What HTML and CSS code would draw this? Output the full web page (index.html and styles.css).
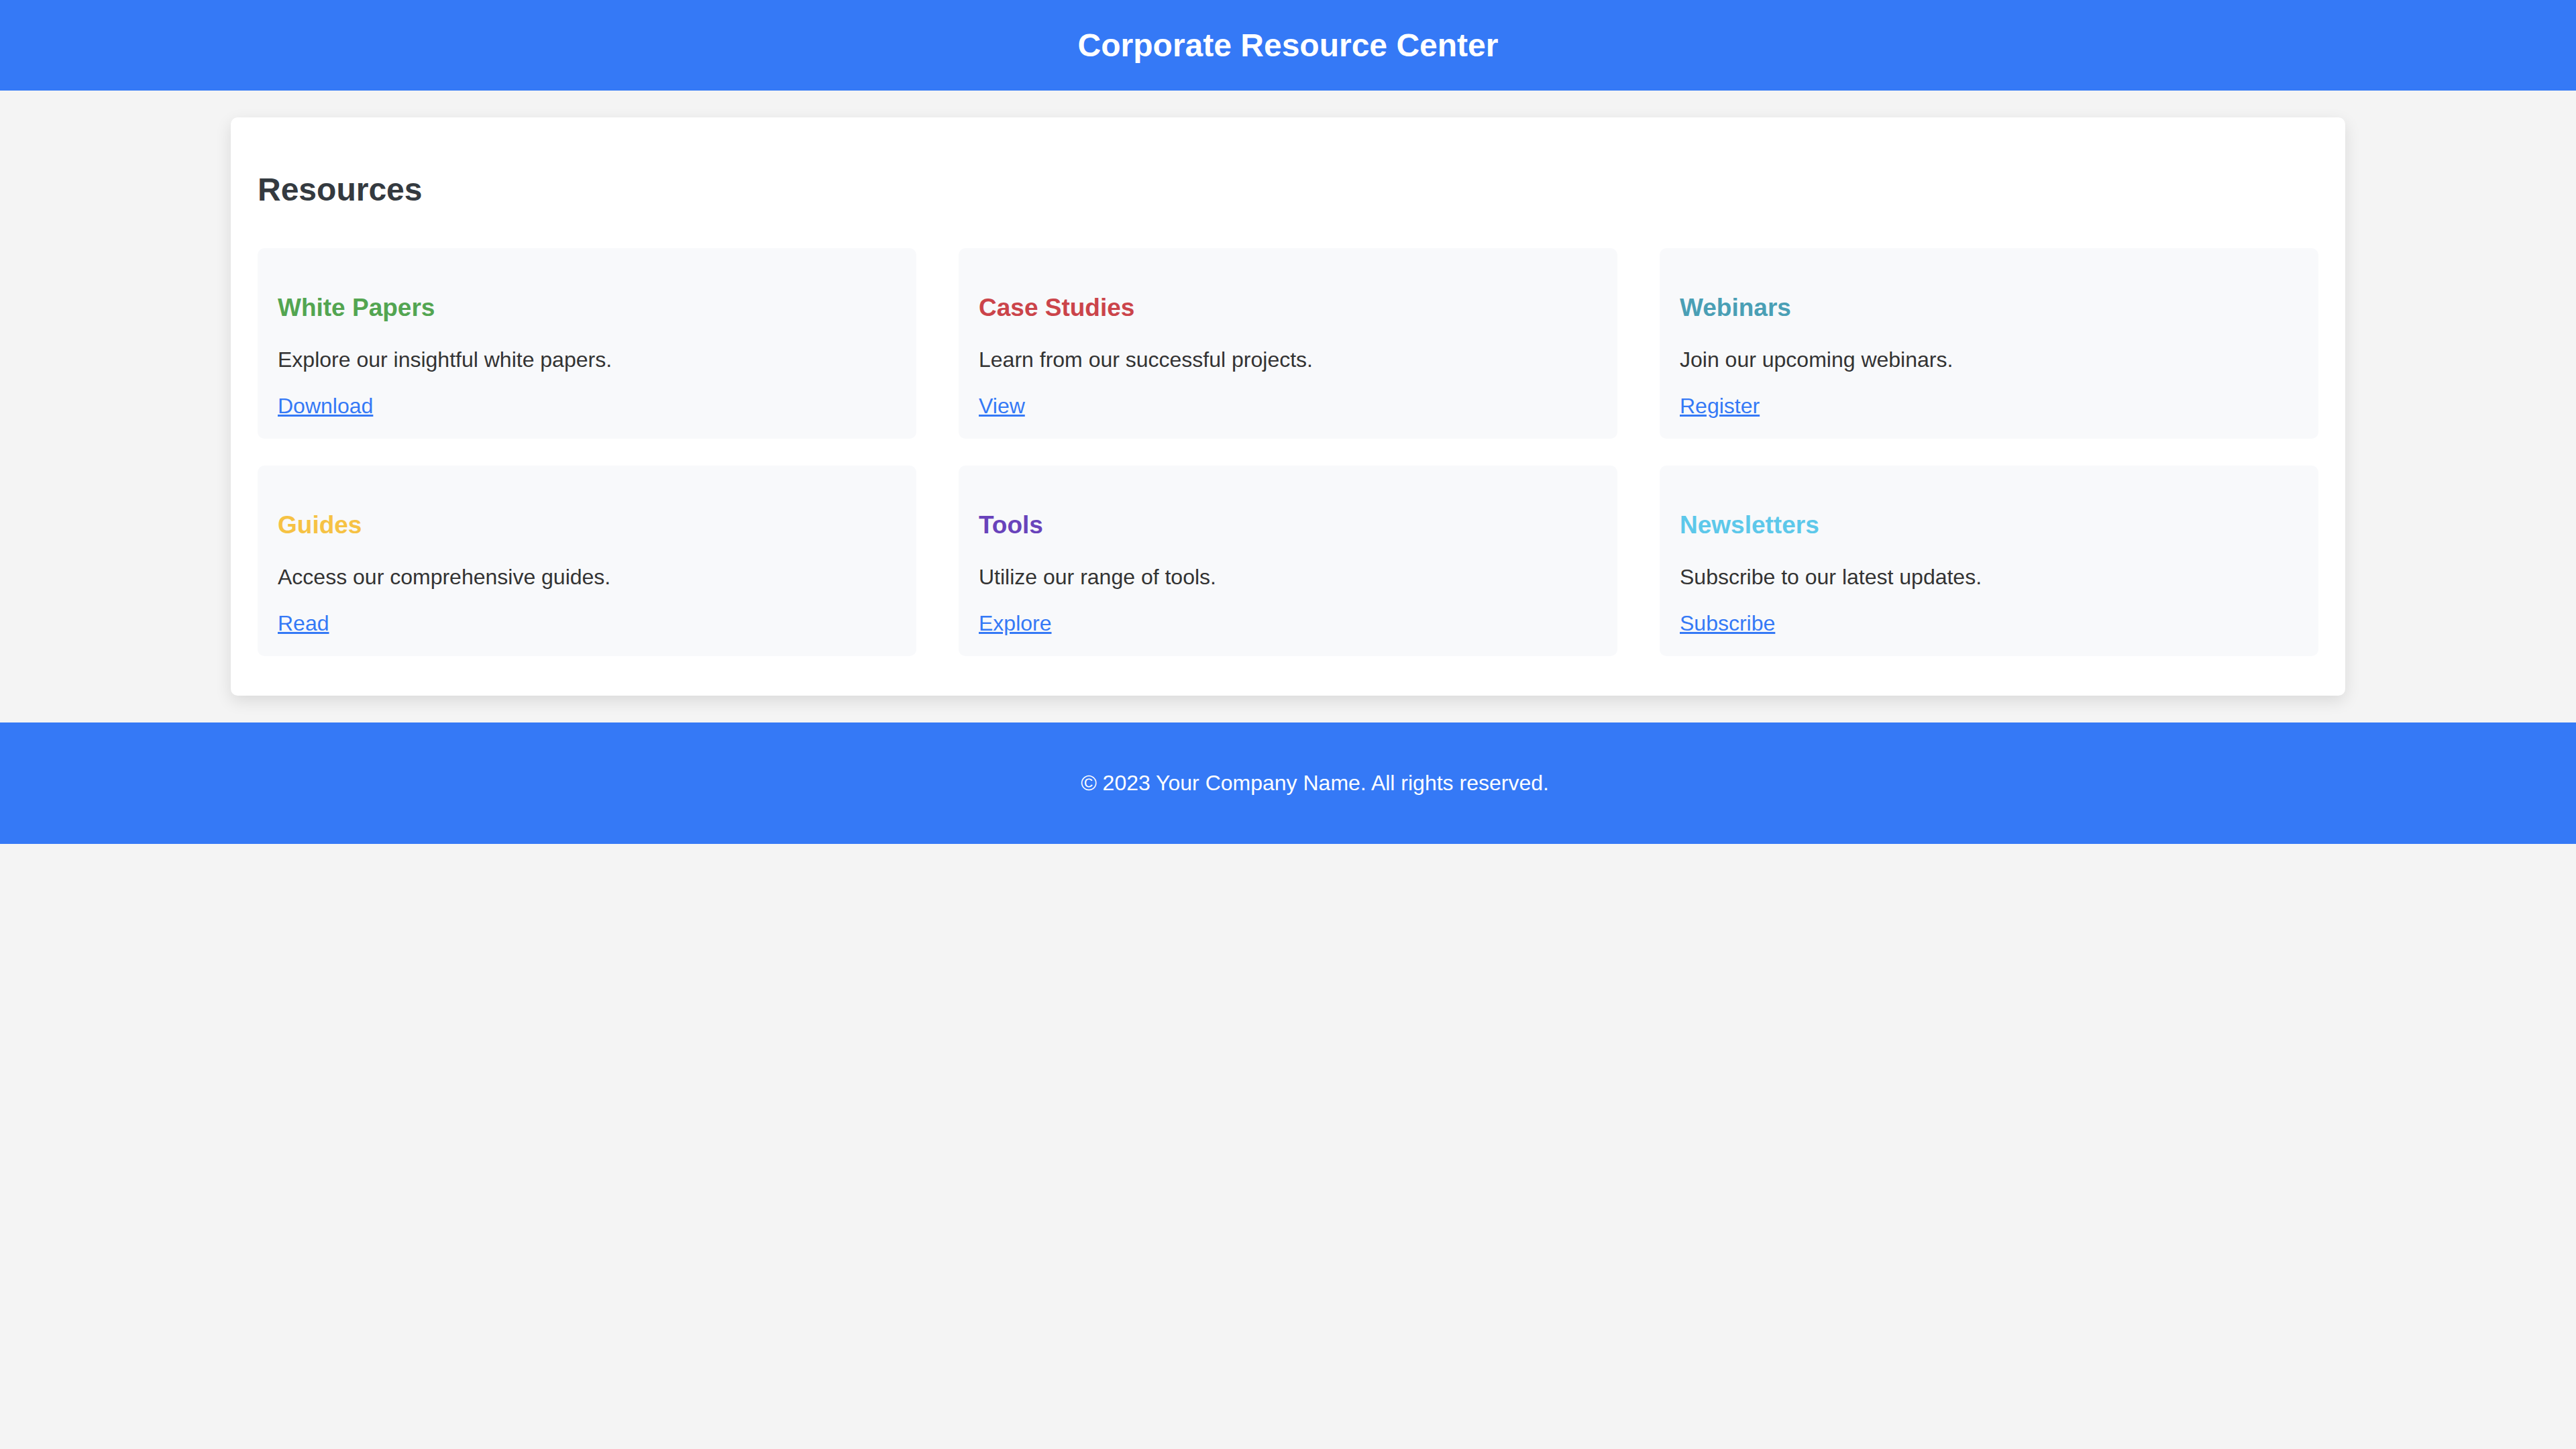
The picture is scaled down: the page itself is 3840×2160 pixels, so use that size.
FILE: index.html
```html
<!DOCTYPE html>
<html lang="en">
<head>
  <meta charset="utf-8">
  <meta name="viewport" content="width=device-width, initial-scale=1">
  <title>Corporate Resource Center</title>
  <link rel="stylesheet" href="styles.css">
</head>
<body>
  <header class="site-header">
    <h1 class="site-title">Corporate Resource Center</h1>
  </header>
  <main class="panel">
    <h2 class="panel-title">Resources</h2>
    <div class="cards">
      <section class="card">
        <h3 class="card-title green">White Papers</h3>
        <p class="card-text">Explore our insightful white papers.</p>
        <a class="card-link" href="#">Download</a>
      </section>
      <section class="card">
        <h3 class="card-title red">Case Studies</h3>
        <p class="card-text">Learn from our successful projects.</p>
        <a class="card-link" href="#">View</a>
      </section>
      <section class="card">
        <h3 class="card-title teal">Webinars</h3>
        <p class="card-text">Join our upcoming webinars.</p>
        <a class="card-link" href="#">Register</a>
      </section>
      <section class="card">
        <h3 class="card-title yellow">Guides</h3>
        <p class="card-text">Access our comprehensive guides.</p>
        <a class="card-link" href="#">Read</a>
      </section>
      <section class="card">
        <h3 class="card-title purple">Tools</h3>
        <p class="card-text">Utilize our range of tools.</p>
        <a class="card-link" href="#">Explore</a>
      </section>
      <section class="card">
        <h3 class="card-title cyan">Newsletters</h3>
        <p class="card-text">Subscribe to our latest updates.</p>
        <a class="card-link" href="#">Subscribe</a>
      </section>
    </div>
  </main>
  <footer class="site-footer">
    <p class="footer-text">© 2023 Your Company Name. All rights reserved.</p>
  </footer>
</body>
</html>
```

FILE: styles.css
```css
* {
  box-sizing: border-box;
}

body {
  margin: 0;
  background: #f4f4f4;
  color: #333;
  font-family: "Liberation Sans", Arial, sans-serif;
  font-size: 32px;
  line-height: 37px;
}

.site-header {
  padding: 40px;
  background: #3579f6;
  color: #fff;
  text-align: center;
}

.site-title,
.panel-title {
  margin: 0;
  font-size: 48px;
  line-height: 55px;
}

.panel {
  width: calc(80% + 80px);
  margin: 40px auto;
  padding: 40px 40px 59px;
  border-radius: 10px;
  background: #fff;
  box-shadow: 0 8px 24px rgba(0, 0, 0, 0.11);
}

.panel-title {
  margin: 40px 0 60px;
  color: #343a40;
}

.cards {
  display: grid;
  grid-template-columns: repeat(3, 1fr);
  gap: 40px 63px;
}

.card {
  padding: 30px;
  border-radius: 10px;
  background: #f8f9fb;
}

.card-title {
  margin: 37px 0 38px;
  font-size: 37px;
  line-height: 43px;
}

.card-text {
  margin: 0 0 32px;
}

.card-link {
  display: inline-block;
  color: #3579f6;
}

.green {
  color: #53a551;
}

.red {
  color: #cb444a;
}

.teal {
  color: #4a9fb5;
}

.yellow {
  color: #f6c244;
}

.purple {
  color: #6943bb;
}

.cyan {
  color: #5dc8ea;
}

/* The left inset shifts the centred notice to the right of the page's middle. */
.site-footer {
  padding: 72px 0 72px 80px;
  background: #3579f6;
  color: #fff;
  text-align: center;
}

.footer-text {
  margin: 0;
}
```
